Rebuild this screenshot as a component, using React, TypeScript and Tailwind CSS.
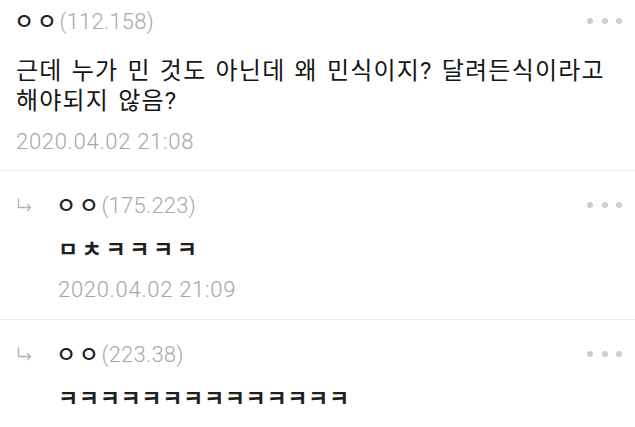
import React from 'react';

const font = { fontFamily: 'Roboto, "Noto Sans CJK KR", sans-serif' };

const Dots = () => (
    <div className="flex gap-[8.5px] pr-[13px]">
        <span className="w-[6px] h-[6px] rounded-full bg-[#cfcfcf]" />
        <span className="w-[6px] h-[6px] rounded-full bg-[#cfcfcf]" />
        <span className="w-[6px] h-[6px] rounded-full bg-[#cfcfcf]" />
    </div>
);

const ReplyArrow = () => (
    <svg width="16" height="14" viewBox="0 0 16 14" fill="none" stroke="#b4b4b4" strokeWidth="1.4" strokeLinecap="round" strokeLinejoin="round">
        <path d="M1.5 1v8.5h12" />
        <path d="M10.5 6.5l3 3-3 3" />
    </svg>
);

const Header = ({ ip }: { ip: string }) => (
    <div className="flex items-center justify-between h-[30px]">
        <div className="flex items-center">
            <span className="-ml-[2px] text-[22px] font-medium text-[#222] tracking-[2.5px]">ㅇㅇ</span>
            <span className="text-[22px] text-[#a9a9a9] font-light tracking-[0.2px]">({ip})</span>
        </div>
        <Dots />
    </div>
);

const Date = ({ value, className }: { value: string; className: string }) => (
    <div className={`h-[28px] leading-[28px] text-[22px] text-[#a6a6a6] font-light tracking-[0.7px] ${className}`}>{value}</div>
);

const Reply = ({ ip, body, date, wide, last }: { ip: string; body: string; date?: string; wide?: boolean; last?: boolean }) => (
    <div className={`flex pl-[17px] pt-[19px] ${last ? '' : 'pb-[15px] border-b border-[#ececec]'}`}>
        <div className="w-[41px] h-[30px] flex items-center shrink-0">
            <ReplyArrow />
        </div>
        <div className="flex-1">
            <Header ip={ip} />
            <div className={`mt-[15px] h-[30px] leading-[30px] text-[22px] font-semibold text-[#1f1f1f] ${wide ? 'tracking-[3.5px]' : 'tracking-[0.6px]'}`}>{body}</div>
            {date && <Date value={date} className="mt-[11px]" />}
        </div>
    </div>
);

export default function App() {
    return (
        <div className="w-[635px] h-[427px] bg-white overflow-hidden" style={font}>
            <div className="pl-[16px] pt-[6px] pb-[14px] border-b border-[#ececec]">
                <Header ip="112.158" />
                <div className="mt-[20px] text-[24px] leading-[30px] text-[#161616] tracking-[1.2px] [word-spacing:2px] break-keep">
                    근데 누가 민 것도 아닌데 왜 민식이지? 달려든식이라고 해야되지 않음?
                </div>
                <Date value="2020.04.02 21:08" className="mt-[12px]" />
            </div>
            <Reply ip="175.223" body="ㅁㅊㅋㅋㅋㅋ" date="2020.04.02 21:09" wide />
            <Reply ip="223.38" body="ㅋㅋㅋㅋㅋㅋㅋㅋㅋㅋㅋㅋㅋㅋ" last />
        </div>
    );
}
